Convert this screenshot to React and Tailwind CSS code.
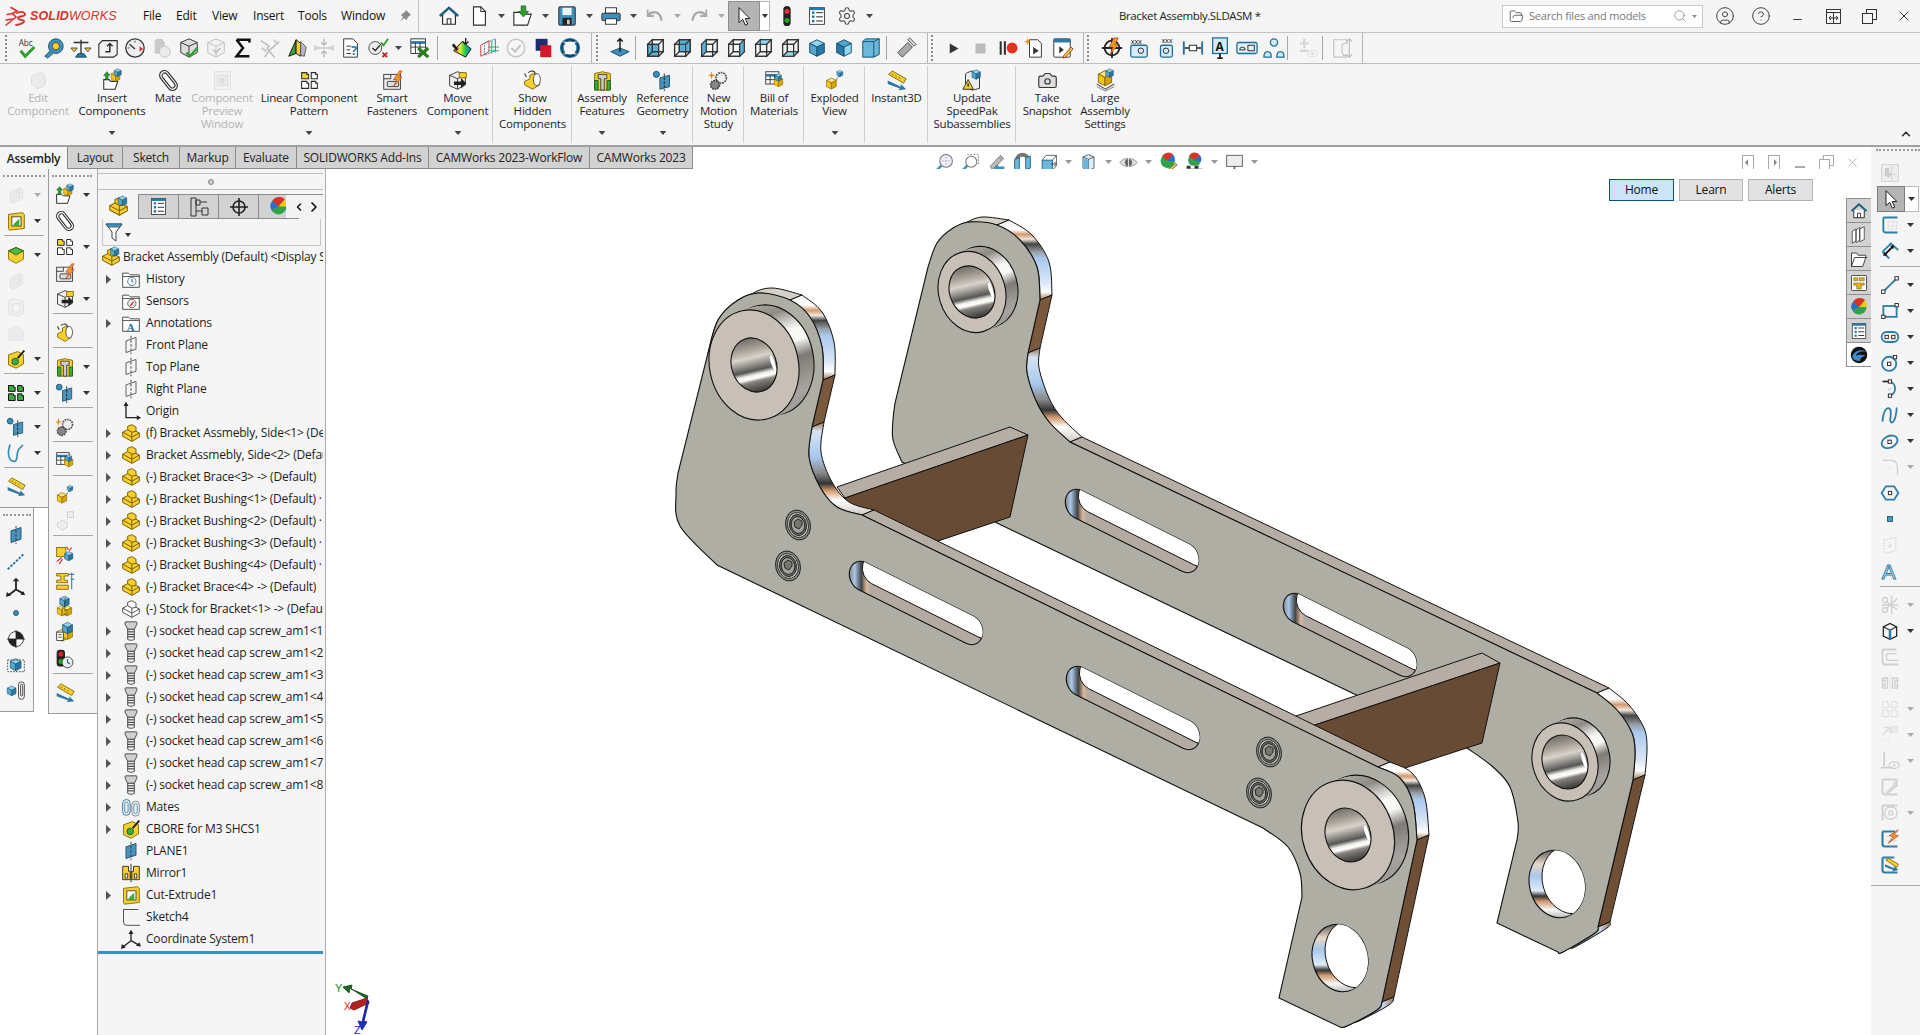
import React from 'react';
import { Settings, CircleUser, CircleHelp, ChevronUp, ChevronRight, ChevronLeft, Search, FolderOpen, X, Minus, Camera } from 'lucide-react';

const B1 = '#5cb0d6', B2 = '#1d6e9b', Y1 = '#f7cf2e', Y2 = '#7d6000', K = '#2d2d2d', SK = '#2e7ea8';
const Cube = ({ x = 0, y = 0, k = 1, t = '#93d3ee', l = '#55a6cf', r = '#2a78a6', st = '#12506f' }) => (
  <g transform={`translate(${x} ${y}) scale(${k})`} stroke={st} strokeWidth="1" strokeLinejoin="round">
    <path d="M12 3l8 4-8 4-8-4z" fill={t} /><path d="M4 7l8 4v10l-8-4z" fill={l} /><path d="M20 7l-8 4v10l8-4z" fill={r} />
  </g>
);
const YCube = (p) => <Cube t="#fde27a" l="#f5c518" r="#d9a400" st={Y2} {...p} />;
const Wire = ({ hi }) => (
  <g stroke={K} strokeWidth="1.1">
    <path d="M4 8h12v13H4z" fill={hi === 'front' ? B1 : 'none'} />
    <path d="M9 3h12v13H9z" fill={hi === 'back' ? B1 : 'none'} />
    <path d="M4 8l5-5h12l-5 5z" fill={hi === 'top' ? '#93d3ee' : 'none'} />
    <path d="M4 21l5-5h12l-5 5z" fill={hi === 'bot' ? '#93d3ee' : 'none'} />
    <path d="M4 8l5-5v13l-5 5z" fill={hi === 'left' ? B1 : 'none'} />
    <path d="M16 8l5-5v13l-5 5z" fill={hi === 'right' ? B1 : 'none'} />
  </g>
);
const Part = ({ f = Y1, st = Y2 }) => (
  <g stroke={st} strokeWidth="1.2" strokeLinejoin="round">
    <path d="M2 11l6-3V4l5-2 5 3v5l4 2v5l-9 5-11-6z" fill={f} />
    <path d="M2 11l11 6 9-5M13 17v5M8 8l5 3v6M13 11l5-1" fill="none" />
  </g>
);
const Asm = () => (<><Part /><Cube x={9} y={-2} k={0.62} /></>);
const Plane = ({ f = 'none', st = '#555' }) => (<><path d="M6 7l12-4v14L6 21z" fill={f} stroke={st} strokeWidth="1.1" /><path d="M12 1v22" stroke="#222" strokeWidth="1" strokeDasharray="3 2" /></>);
const Pattern = ({ a = Y1, b = Y1, st = K }) => (
  <g stroke={st} strokeWidth="1.2">
    <path d="M3 3h6v2h2v5H3z" fill={a} /><path d="M14 3h5v2h2v5h-7z" fill={a === Y1 ? '#fff' : b} /><path d="M3 13h6v2h2v6H3z" fill={b === Y1 ? '#fff' : b} /><path d="M14 13h5v2h2v6h-7z" fill={b === Y1 ? '#fff' : b} />
  </g>
);
const Folder = ({ children }) => (<><path d="M2 5h7l2 2h11v15H2z" fill="#fff" stroke="#444" strokeWidth="1.1" /><path d="M2 9h20" stroke="#444" strokeWidth="1" />{children}</>);
const Ruler = () => (<><path d="M3 5l4-4 16 9-3 5z" fill={Y1} stroke={Y2} /><path d="M7 4l1 2M11 6l1 2M15 8l1 2" stroke={Y2} /><path d="M2 12l15 7v-3l6 6-9 1 2-2L2 16z" fill="#2a78a6" /></>);
const Ref = () => (<><circle cx="5" cy="5" r="3.5" fill="#3d8fba" stroke="#174f6d" /><path d="M9 9l11-3v13L9 22z" fill="#4c93bb" stroke="#174f6d" /><path d="M14 4v20" stroke="#111" strokeDasharray="3 1.5" /></>);
const Clip = ({ c = K }) => (
  <g transform="rotate(-38 12 12)" stroke={c} strokeWidth="1.3">
    <rect x="6.5" y="-1" width="11" height="26" rx="5.5" fill="#fff" />
    <rect x="9" y="2" width="6" height="20" rx="3" />
  </g>
);
const Node = ({ x, y }) => <rect x={x - 2} y={y - 2} width="4" height="4" fill="#fff" stroke="#222" strokeWidth="1.1" />;
const sk = { stroke: SK, strokeWidth: 2.2, fill: 'none' };
const cb = { stroke: '#999', strokeWidth: 1.6, fill: 'none' };

const I = {
  home: <><path d="M2 12L12 3l10 9" stroke="#1d5e80" strokeWidth="2.6" /><path d="M5 11v10h14V11" stroke={K} strokeWidth="1.3" fill="#fff" /><path d="M10 21v-6h4v6" stroke={K} strokeWidth="1.2" /></>,
  doc: <><path d="M6 2h8l5 5v15H6z" fill="#fff" stroke={K} strokeWidth="1.2" /><path d="M14 2v5h5" stroke={K} strokeWidth="1.1" /></>,
  folderIn: <><path d="M2 8h7l2 2h10l-4 12H2z" fill="#fff" stroke={K} strokeWidth="1.2" /><path d="M10 1h5v6h3l-5.5 6L7 7h3z" fill="#2f9e2f" stroke="#145c14" strokeWidth=".8" /></>,
  save: <><rect x="3" y="2" width="18" height="20" rx="1" fill="#3f8fbc" stroke="#222" /><rect x="7" y="3" width="10" height="8" fill="#eaf3f8" /><rect x="7" y="14" width="10" height="8" fill="#222" /><rect x="12" y="16" width="3" height="5" fill="#ccc" /></>,
  print: <><rect x="6" y="3" width="12" height="6" fill="#fff" stroke={K} /><rect x="2" y="9" width="20" height="8" rx="1" fill="#3f8fbc" stroke={K} /><rect x="6" y="15" width="12" height="6" fill="#fff" stroke={K} /></>,
  undo: <><path d="M4 5v7h7" stroke="#aaa" strokeWidth="2" /><path d="M4 12c4-6 14-6 15 5" stroke="#aaa" strokeWidth="2.6" /></>,
  redo: <><path d="M20 5v7h-7" stroke="#aaa" strokeWidth="2" /><path d="M20 12C16 6 6 6 5 17" stroke="#aaa" strokeWidth="2.6" /></>,
  cursor: <path d="M6 2v18l4.5-4 3 7 3-1.3-3-6.7H19z" fill="#fff" stroke="#222" strokeWidth="1.2" />,
  traffic: <><rect x="8" y="1" width="8" height="22" rx="4" fill="#222" /><circle cx="12" cy="7" r="2.7" fill="#e33" /><circle cx="12" cy="17" r="2.7" fill="#2a2" /></>,
  list: <><rect x="3" y="2" width="18" height="20" fill="#fff" stroke={K} /><rect x="3" y="2" width="18" height="3" fill="#2a7aa8" /><path d="M6 8h3M6 13h3M6 18h3" stroke="#2a7aa8" strokeWidth="3" /><path d="M11 8h8M11 13h8M11 18h8" stroke={K} strokeWidth="1.2" /></>,
  gear: <Settings size={24} color="#444" strokeWidth={1.3} />,
  abc: <><text x="3" y="9.5" fontSize="9" fill="#333" fontFamily="Open Sans">Abc</text><path d="M5 15l5 6 10-10" stroke="#2f9e2f" strokeWidth="3.2" /></>,
  tape: <><circle cx="14" cy="10" r="8" fill="#3f8fbc" stroke="#174f6d" /><circle cx="14" cy="10" r="4" fill={Y1} stroke="#444" /><path d="M8 15l-6 6 3 2 6-5" fill="#3f8fbc" stroke="#174f6d" /></>,
  balance: <><path d="M12 3v17M4 6h16" stroke="#333" strokeWidth="1.5" /><path d="M1 12h7l-3.5 4zM16 12h7l-3.5 4z" fill={Y1} stroke="#444" /><path d="M6 22h12l-3-4H9z" fill="#2a78a6" stroke="#174f6d" /></>,
  jump: <><path d="M6 4h16v15l-4 3H2V8z" fill="#f2f2f2" stroke={K} strokeWidth="1.2" /><path d="M9 16h5V8M11 10l3-3 3 3" stroke={K} strokeWidth="1.6" /></>,
  gauge: <><circle cx="12" cy="12" r="10" fill="#eee" stroke="#333" strokeWidth="1.4" /><path d="M6 8l6 5" stroke="#333" strokeWidth="1.5" /><path d="M17 10l4 3-4 3z" fill="#d33" /><path d="M4 12h2M12 4v2" stroke="#333" /></>,
  clock: <><path d="M6 2h6l3 4v12H4V4z" fill="#888" /><circle cx="15" cy="16" r="6" fill="#ddd" stroke="#777" /></>,
  cubeCheck: <><path d="M3 6l9-4 9 4v11l-9 5-9-5z" fill="#ddd" stroke={K} /><path d="M3 6l9 4 9-4M12 10v11" stroke={K} /><path d="M9 17l4 4 8-9" stroke="#2f9e2f" strokeWidth="2.6" /></>,
  cubeCheckG: <><path d="M3 6l9-4 9 4v11l-9 5-9-5z" fill="#f2f2f2" stroke="#bbb" /><path d="M3 6l9 4 9-4M12 10v11" stroke="#bbb" /><path d="M9 14l3 3 5-5" stroke="#bbb" strokeWidth="1.6" /></>,
  sigma: <path d="M5 3h14v3M19 21H5l7-9-7-9" stroke="#111" strokeWidth="2.8" />,
  cross: <><path d="M2 4l9 6-2 3 8 9M22 5L12 14l-6 8" stroke="#bbb" strokeWidth="1.6" /><path d="M16 3l5 5M3 12l5 4" stroke="#ccc" strokeWidth="2.4" /></>,
  shells: <><path d="M11 3L3 21l8-3z" fill="#3aa03a" stroke="#111" /><path d="M11 3l5 4v14l-5-3z" fill={Y1} stroke="#111" /><path d="M16 5l6 6-2 10-4-1z" fill="#bbb" stroke="#555" /></>,
  compress: <><path d="M12 2v6M9 6l3 3 3-3M12 22v-6M9 18l3-3 3 3" stroke="#bbb" strokeWidth="1.6" /><path d="M2 10l5 2-5 2zM22 10l-5 2 5 2zM4 12h16" stroke="#c9c9c9" strokeWidth="1.4" /></>,
  docQ: <><path d="M4 2h10l5 5v15H4z" fill="#fff" stroke={K} /><path d="M7 10h5M7 14h4M7 18h5" stroke={K} /><text x="12" y="20" fontSize="14" fontWeight="700" fill="#2a7aa8" fontFamily="Open Sans">?</text></>,
  checkX: <><circle cx="9" cy="12" r="7" fill="#eee" stroke="#444" /><path d="M6 12l3 3 5-6" stroke="#333" strokeWidth="1.6" /><path d="M15 6l3 3 5-7" stroke="#2f9e2f" strokeWidth="2" /><path d="M17 17l5 5M22 17l-5 5" stroke="#c22" strokeWidth="2" /></>,
  tableX: <><path d="M2 2h16v16H2z" fill="#fff" stroke={K} /><path d="M2 6h16" stroke="#2a7aa8" strokeWidth="3" /><path d="M2 11h16M7 6v12M12 6v12" stroke={K} /><path d="M10 12l11 10M21 12L10 22" stroke="#2d7a1f" strokeWidth="3.4" /></>,
  zebra: <><path d="M3 15L12 5l10 8-6 9z" fill="url(#rb)" stroke="#111" /><path d="M2 8l5 6" stroke="#222" strokeWidth="3" /><path d="M16 1v7M13 5l3 3 3-3" stroke="#222" strokeWidth="1.5" /></>,
  mesh: <><path d="M3 9l9-5v12l-9 5z" fill="none" stroke="#d33" /><path d="M7 7l12-5v13L7 20z" fill="none" stroke="#2a7aa8" strokeDasharray="2 1" /><path d="M11 11h12M11 15h12M15 4v14M19 3v14" stroke="#2a7" strokeWidth="1" /></>,
  okGray: <><circle cx="12" cy="12" r="9.5" fill="#f5f5f5" stroke="#c5c5c5" strokeWidth="1.6" /><path d="M7 12l4 4 6-7" stroke="#c5c5c5" strokeWidth="2.2" /></>,
  squares: <><rect x="4" y="2" width="13" height="13" fill="#1c2d70" /><rect x="9" y="9" width="12" height="13" fill="#d8162a" /></>,
  ring: <><circle cx="12" cy="12" r="9" stroke="#1d6e9b" strokeWidth="4" /><path d="M5 5l6 3M19 5l-6 3M5 19l6-3M19 19l-6-3" stroke="#fff" strokeWidth="2" /><circle cx="12" cy="12" r="9" stroke="#123" strokeWidth="1" /></>,
  planeAxis: <><path d="M2 16l10-4 10 4-10 5z" fill="#3d8fba" stroke="#174f6d" /><path d="M12 16V2M9 5l3-3 3 3" stroke="#111" strokeWidth="1.5" /></>,
  wFront: <Wire hi="front" />, wBack: <Wire hi="back" />, wLeft: <Wire hi="left" />, wRight: <Wire hi="right" />, wTop: <Wire hi="top" />, wBot: <Wire hi="bot" />,
  iso: <Cube x={0} y={0} />, cubeD: <Cube t="#55a6cf" l="#2a78a6" r="#93d3ee" />,
  cubeR: <><path d="M6 2h15v17l-6 3H3V5z" fill="#6ab8dc" stroke="#12506f" /><path d="M3 5h12v17M15 5l6-3" stroke="#12506f" /></>,
  torch: <><path d="M3 17l11-11 5 5L8 22z" fill="#aaa" stroke="#444" /><path d="M14 3l7 7 2-2-7-7z" fill="#ddd" stroke="#444" /></>,
  play: <path d="M6 4l14 8-14 8z" fill="#333" />,
  stop: <rect x="4" y="4" width="16" height="16" fill="#bbb" />,
  rec: <><path d="M2 4h2.5v16H2zM7 4h2.5v16H7z" fill="#333" /><circle cx="17" cy="12" r="6.5" fill="#e8301c" /></>,
  film: <><path d="M6 3h9l4 4v15H6z" fill="#fff" stroke={K} /><path d="M10 11l6 4-6 4z" fill="#333" /><path d="M4 1l1 3 3 1-3 1-1 3-1-3-3-1 3-1z" fill="#e88b1a" /></>,
  filmPen: <><rect x="3" y="2" width="18" height="20" rx="1" fill="#fff" stroke={K} /><path d="M3 2h18v4H3z" fill="#2a7aa8" /><path d="M9 10l5 4-5 4z" fill="#333" /><path d="M14 20l8-9 2 2-8 9-3 1z" fill={Y1} stroke="#a33" /></>,
  target: <><circle cx="12" cy="12" r="8" stroke="#222" strokeWidth="2" /><path d="M12 1v22M1 12h22" stroke="#222" strokeWidth="2" /><path d="M14 1l-5 10h4l-3 8 9-11h-4l4-7z" fill="#f59b1a" stroke="#a33" strokeWidth=".7" /></>,
  xbox: <><rect x="3" y="9" width="18" height="13" rx="2" fill="#d6ebf6" stroke={B2} strokeWidth="1.4" /><circle cx="14" cy="15" r="3" stroke="#222" /><text x="3" y="8" fontSize="8" fill="#222" fontFamily="Open Sans">xxx</text></>,
  xbox2: <><rect x="6" y="9" width="13" height="13" rx="2" fill="#d6ebf6" stroke={B2} strokeWidth="1.4" /><circle cx="12" cy="15" r="3" stroke="#222" /><text x="7" y="7" fontSize="8" fill="#222" fontFamily="Open Sans">xxx</text></>,
  dimA: <><path d="M2 5v14M22 5v14" stroke={B2} strokeWidth="2" /><path d="M3 12h5M16 12h5" stroke="#222" strokeWidth="1.5" /><rect x="8" y="9" width="8" height="6" fill="#fff" stroke="#222" /></>,
  noteA: <><rect x="4" y="1" width="16" height="17" fill="#d6ebf6" stroke={B2} strokeWidth="1.4" /><text x="7" y="15" fontSize="13" fontWeight="700" fill="#111" fontFamily="Open Sans">A</text><path d="M12 18v4M9 23h6" stroke="#222" strokeWidth="2" /></>,
  label: <><rect x="1" y="6" width="22" height="12" rx="2" fill="#e0eef6" stroke={B2} strokeWidth="1.4" /><path d="M4 14a3 3 0 016 0zM13 9h7v6h-7z" stroke="#222" /></>,
  people: <><path d="M12 2a4 4 0 014 4c0 2-2 4-4 4s-4-2-4-4a4 4 0 014-4z" fill="#d6ebf6" stroke={B2} strokeWidth="1.4" /><path d="M1 22c0-8 8-8 8 0zM15 22c0-8 8-8 8 0z" fill="#d6ebf6" stroke={B2} strokeWidth="1.4" /></>,
  plusEye: <><path d="M9 2v10M4 7h10M4 15h9" stroke="#aaa" strokeWidth="2.6" /><ellipse cx="18" cy="18" rx="5" ry="3.5" stroke="#bbb" /><circle cx="18" cy="18" r="1.8" fill="#bbb" /></>,
  treeOff: <><path d="M3 3h14v4h-3l-2 2v8l2 3h3v2H3z" stroke="#c5c5c5" strokeWidth="1.3" /><path d="M20 2v20M17 5l3-3 3 3M17 19l3 3 3-3" stroke="#bbb" strokeWidth="1.2" /></>,
  editC: <><path d="M4 7l10-5 6 5-1 11-9 4-6-6z" fill="#ddd" stroke="#bbb" /><path d="M9 20l9-11 2 2-9 10z" fill="#eee" stroke="#bbb" /></>,
  clip: <Clip />,
  prevW: <><rect x="3" y="2" width="18" height="20" fill="#eee" stroke="#bbb" /><rect x="6" y="6" width="12" height="12" fill="#ddd" stroke="#bbb" /><path d="M9 9h5v7l-5-2z" fill="#bbb" /></>,
  pattern: <Pattern />,
  patternG: <Pattern a="#3fa83f" b="#3fa83f" st="#111" />,
  fast: <><rect x="2" y="5" width="19" height="17" fill="#eee" stroke={K} /><path d="M2 10h8V5" stroke={K} /><rect x="6" y="13" width="13" height="6" rx="1" fill="#ddd" stroke={K} /><path d="M20 1l-7 10h4l-4 8 10-11h-4l4-7z" fill="#f59b1a" stroke="#a33" strokeWidth=".7" /></>,
  move: <><path d="M3 6l9-4 9 3v12l-9 5-9-4z" fill="#eee" stroke={K} /><path d="M3 6l9 4v12M12 10l9-5" stroke={K} /><path d="M14 3h8v6h-8z" fill={Y1} stroke={Y2} /><path d="M8 13h8V9l6 6-6 6v-4H8z" fill="#222" /></>,
  hidden: <><path d="M3 13l6-3v-4l4-2 4 3v4l3 2v4l-8 5-9-5z" fill={Y1} stroke={Y2} /><ellipse cx="17" cy="11" rx="4" ry="7" fill="#fff" stroke="#444" /><path d="M7 3c4-3 8-2 8 2M5 8L3 4" stroke="#444" strokeWidth="1.4" /></>,
  feat: <><path d="M3 4l9-2 9 2v17l-4 2H7l-4-2z" fill={Y1} stroke={Y2} /><path d="M3 12h4v11H3zM17 12h4v11h-4z" fill="#3fa83f" stroke="#145c14" /><path d="M7 5h10v5h-3v13h-4V10H7z" fill="#ccc" stroke="#333" /></>,
  ref: <Ref />,
  gears: <><circle cx="15" cy="9" r="6" fill="#eee" stroke="#555" strokeWidth="2" strokeDasharray="2 1" /><circle cx="8" cy="17" r="5" fill="#888" stroke="#444" strokeWidth="2" strokeDasharray="2 1" /><path d="M4 1l1 4 4 1-4 1-1 4-1-4-3-1 3-1z" fill="#e88b1a" /></>,
  bom: <><rect x="2" y="2" width="15" height="14" fill="#fff" stroke={K} /><path d="M2 6h15" stroke="#2a7aa8" strokeWidth="3" /><path d="M2 11h15M7 6v10M12 6v10" stroke={K} /><YCube x={9} y={6} k={0.62} /><Cube x={11} y={3} k={0.45} /></>,
  expl: <><YCube x={0} y={7} k={0.7} /><path d="M14 11l4-5" stroke="#222" strokeDasharray="2 1.4" /><Cube x={13} y={-1} k={0.42} /></>,
  instant: <Ruler />,
  speed: <><path d="M6 3l6-2 8 3v17l-8 2-8-3V5z" fill="#eee" stroke="#222" /><Cube x={9} y={-2} k={0.6} /><path d="M1 22l6-11 6 11z" fill={Y1} stroke="#222" /><path d="M7 15v4" stroke="#222" strokeWidth="1.5" /></>,
  cam: <Camera size={24} color="#333" fill="#ddd" strokeWidth={1.3} />,
  large: <><path d="M2 16l10 6 10-6" stroke="#555" strokeWidth="1.2" /><path d="M2 19l10 5 10-5" stroke="#888" strokeWidth="1.2" /><YCube x={0} y={-2} k={0.95} /><Cube x={10} y={-3} k={0.55} /></>,
  cut: <><path d="M3 4l17-2 2 2v17l-18 2-1-2z" fill={Y1} stroke={Y2} /><rect x="7" y="7" width="11" height="11" fill="#fff" stroke="#333" /><path d="M9 16l7-7v9H9z" fill="#3fa83f" /></>,
  boss: <><path d="M3 7l9-4 9 4v10l-9 5-9-5z" fill={Y1} stroke={Y2} /><path d="M3 7l9 5 9-5-9-4z" fill="#54b840" stroke="#145c14" /></>,
  shellOff: <path d="M5 9l12-6 3 2v11L8 22l-3-2zM9 11l7-4v7l-7 3z" fill="#ddd" stroke="#bbb" />,
  boxOff: <><path d="M3 5l6-3 12 3v15l-6 3-12-3z" fill="#e8e8e8" stroke="#bbb" /><path d="M8 8h9v10H8z" fill="#f5f5f5" stroke="#bbb" /></>,
  wedgeOff: <path d="M3 8l10-5 8 7v11H3z" fill="#ddd" stroke="#ccc" />,
  wiz: <><path d="M3 7l11-4 7 4v11l-9 5-9-4z" fill={Y1} stroke={Y2} /><circle cx="11" cy="15" r="4" fill="#3fa83f" stroke="#145c14" /><path d="M14 11L22 2" stroke="#222" strokeWidth="2.4" /></>,
  curve: <path d="M5 2C1 12 3 22 10 22c5 0 2-10 5-14 2-3 4-3 5-6" stroke="#3b8bb3" strokeWidth="2" />,
  planeB: <Plane f="#4c93bb" st="#174f6d" />,
  dline: <path d="M2 22L22 3" stroke="#1d6e9b" strokeWidth="2.2" strokeDasharray="3 1.6" />,
  axis: <><path d="M12 15V3M12 15l9 5M12 15l-9 7" stroke="#222" strokeWidth="2.2" /><path d="M8 5l4-4 4 4z" fill="#222" /><path d="M17 21l6 1-2-5zM1 18l-1 6 6-2z" fill="#222" /></>,
  pt: <circle cx="12" cy="12" r="3" fill="#3d8fba" stroke="#174f6d" />,
  disc: <><circle cx="12" cy="12" r="9" fill="#fff" stroke="#222" /><path d="M12 3a9 9 0 019 9h-9zM12 21a9 9 0 01-9-9h9z" fill="#222" /><path d="M12 1v22M1 12h22" stroke="#222" /></>,
  cubeDash: <><Cube x={2} y={2} k={0.8} /><path d="M2 6h20v14H2z" stroke="#333" strokeDasharray="2 1.5" /></>,
  cubeClip: <><Cube x={-1} y={4} k={0.65} /><rect x="15" y="1" width="7" height="21" rx="3.5" stroke="#333" /><rect x="17.5" y="4" width="2.5" height="14" rx="1.2" stroke="#333" /></>,
  explOff: <><path d="M3 14l6-3 6 3v5l-6 4-6-4z" fill="#eee" stroke="#ccc" /><path d="M14 11l4-5" stroke="#ccc" strokeDasharray="2 1.4" /><rect x="15" y="1" width="7" height="7" fill="#eee" stroke="#ccc" /></>,
  coll: <><rect x="2" y="3" width="11" height="11" fill={Y1} stroke={Y2} /><Cube x={9} y={6} k={0.62} /><path d="M14 2l2 4M20 3l-3 4M2 20l6-5M5 23l4-6" stroke="#d33" strokeWidth="1.4" /></>,
  beams: <><path d="M2 3h14v3h-5v5h4v3H2v-3h5V6H2z" fill={Y1} stroke={Y2} /><path d="M2 17h14v5H2z" fill={Y1} stroke={Y2} /><path d="M17 4h6M19 10h4M20 2v20" stroke="#3b8bb3" strokeWidth="1.4" /></>,
  lightClock: <><rect x="2" y="1" width="10" height="20" rx="4" fill="#222" /><circle cx="7" cy="6" r="3" fill="#d22" /><circle cx="7" cy="15" r="3" fill="#2a2" /><circle cx="15" cy="16" r="6.5" fill="#eee" stroke="#333" /><path d="M15 12v4l3 2" stroke="#1d6e9b" strokeWidth="1.4" /></>,
  cubeAsm: <><YCube x={0} y={8} k={0.7} /><YCube x={6} y={8} k={0.7} /><Cube x={3} y={-3} k={0.7} /><path d="M12 1v22" stroke="#333" strokeDasharray="3 1.5" /></>,
  cubeAsm2: <><YCube x={-1} y={5} k={0.8} /><YCube x={7} y={5} k={0.7} /><Cube x={6} y={-3} k={0.75} /><path d="M2 11h8v10H2z" fill="#fff" stroke="#333" /><path d="M4 14h4M4 17h4" stroke="#333" /></>,
  mapOff: <><rect x="2" y="2" width="20" height="20" fill="#eee" stroke="#ccc" /><path d="M6 6h5v5l3 2-4 5-4-4z" fill="#ccc" /><path d="M14 4v16M4 14h16" stroke="#ccc" /></>,
  skGrid: <><path d="M4 3h17M4 3v15q0 3 3 3h14" {...sk} /><path d="M9 8h12M9 13h12M9 17h12M10 7v10M15 7v10M20 7v10" stroke="#ddd" /></>,
  dim: <><path d="M3 13L13 3l9 8M3 13l8 8" {...sk} /><path d="M6 16l9-9" stroke="#111" strokeWidth="2.4" /><path d="M4 18l5-1-4-4zM17 5l-5 1 4 4z" fill="#111" /></>,
  line: <><path d="M4 20L20 4" {...sk} /><Node x={4} y={20} /><Node x={20} y={4} /></>,
  rect: <><rect x="4" y="6" width="16" height="13" {...sk} /><Node x={4} y={19} /><Node x={20} y={5} /></>,
  slot: <><rect x="2" y="6" width="20" height="12" rx="6" {...sk} /><Node x={8} y={12} /><Node x={16} y={12} /></>,
  circ: <><circle cx="11" cy="13" r="8.5" {...sk} /><Node x={11} y={13} /><Node x={18} y={5} /></>,
  arc: <><path d="M3 3h8" stroke="#222" strokeWidth="2" /><path d="M12 3a9 9 0 010 17" {...sk} /><Node x={12} y={3} /><Node x={12} y={20} /><path d="M10 11l3 3M13 11l-3 3" stroke="#bbb" /></>,
  spline: <path d="M3 20C4 6 9 1 12 5s-2 16 2 16 6-12 6-18" {...sk} />,
  ellipse: <><ellipse cx="11.5" cy="13" rx="10" ry="7" transform="rotate(-25 11.5 13)" {...sk} /><Node x={11.5} y={13} /></>,
  filletOff: <><path d="M3 4h10q8 0 8 9v9" {...cb} /><path d="M9 12l3 3M12 12l-3 3" stroke="#ccc" /></>,
  poly: <><path d="M7 4h10l5 8-5 8H7l-5-8z" {...sk} /><Node x={12} y={12} /></>,
  ptS: <rect x="9" y="9" width="6" height="6" fill="#4c9ac4" stroke="#174f6d" />,
  planeOff: <><path d="M5 6l14-3v16L5 22z" stroke="#888" strokeDasharray="2 1.5" /><path d="M9 13h6M12 10v6" stroke="#aaa" /></>,
  textA: <text x="2" y="21" fontSize="25" fontWeight="400" fill="#fff" stroke={SK} strokeWidth="1.2" fontFamily="Liberation Sans">A</text>,
  trim: <><circle cx="6" cy="6" r="3" {...cb} /><circle cx="6" cy="18" r="3" {...cb} /><path d="M8 8l13 10M8 16L21 4M14 1v22M2 12h20" {...cb} /></>,
  cubeK: <><path d="M4 7l8-4 8 4v11l-8 4-8-4z" fill="#f7f7f7" stroke="#222" strokeWidth="1.5" /><path d="M4 7l8 4 8-4" stroke="#222" strokeWidth="1.3" /><path d="M12 11v11" stroke="#2a78a6" strokeWidth="3" /></>,
  offs: <><path d="M3 3h17M3 3v14q0 4 4 4h15" {...cb} strokeWidth="2.2" /><path d="M8 8h12M8 8v7q0 1 1 1h13" {...cb} /></>,
  mirOff: <><path d="M12 1v22" stroke="#bbb" /><path d="M3 6h6v12H3zM21 6h-6v12h6z" {...cb} /><path d="M3 9h3v6H3M21 9h-3v6h3" {...cb} /></>,
  patOff: <Pattern a="none" b="none" st="#bbb" />,
  moveOff: <><path d="M3 12l9-9M5 3h7v7" stroke="#bbb" strokeWidth="2" /><rect x="14" y="2" width="7" height="7" fill="#ddd" stroke="#bbb" /><path d="M3 15v7M7 15v7M11 15v7" stroke="#ddd" strokeWidth="2" strokeDasharray="2 1.5" /></>,
  relOff: <><path d="M5 1v17M1 20h14" {...cb} strokeWidth="2" /><ellipse cx="17" cy="17" rx="6" ry="4" {...cb} /><circle cx="17" cy="17" r="2" fill="#bbb" /></>,
  repOff: <><path d="M3 3h18M3 3v15q0 3 3 3h15" {...cb} strokeWidth="2.2" /><path d="M8 19l9-9a3 3 0 014-4l-2 3 2 1-3 2-9 8z" {...cb} /></>,
  imgOff: <><path d="M3 3h18M3 3v18" {...cb} strokeWidth="2.4" /><circle cx="13" cy="12" r="7.5" {...cb} /><circle cx="13" cy="12" r="2.5" {...cb} /></>,
  rapid: <><path d="M3 3h15M3 3v15q0 3 3 3h15" {...sk} strokeWidth="2.6" /><path d="M7 9h14M7 14h14M12 5v15M17 5v15" stroke="#ddd" /><path d="M22 1l-11 7 5 1-6 8 12-9-5-1z" fill="#f5a51a" stroke="#a33" strokeWidth=".8" /></>,
  instS: <><path d="M3 3h14M3 3v15q0 3 3 3h15" {...sk} strokeWidth="2.6" /><path d="M7 6l3-2 12 7-2 4z" fill={Y1} stroke={Y2} /><path d="M6 11l11 5v-3l5 5-8 2 2-2L6 14z" fill="#2a78a6" /></>,
  books: <><path d="M3 7l5-3v16l-5 3zM8 5l5-3v17l-5 3zM13 4l6-3v17l-6 3z" fill="#fff" stroke="#333" /></>,
  folderT: <path d="M2 4h7l2 3h10v3l-4 12H2zM2 22l4-12h17" fill="#fff" stroke="#333" strokeWidth="1.2" />,
  palette: <><rect x="2" y="2" width="20" height="20" rx="1" fill="#fff" stroke="#222" /><path d="M5 5h5v4H5zM12 5h7v4h-7zM5 12h14v3h-4v5H9v-5H5z" fill="#e9b200" stroke="#554" strokeWidth=".7" /></>,
  ball: <><circle cx="12" cy="12" r="10" fill="#2fa24a" /><path d="M12 12L4 5a10 10 0 0116-2z" fill="#d8332a" /><path d="M12 12l8-9a10 10 0 012 9z" fill="#f2c81a" /><path d="M12 12L4 5a10 10 0 00-1 11z" fill="#2a6fd0" /></>,
  swirl: <><circle cx="12" cy="12" r="11" fill="#111" /><path d="M3 14c2-8 13-11 19-6-8-2-13 1-14 5 3-2 9-2 13 0-5 1-7 3-8 7-5 0-9-2-10-6z" fill="#3b8bd0" /></>,
  zoomF: <><circle cx="14" cy="10" r="8" fill="#eef" stroke="#777" strokeWidth="1.3" /><path d="M14 5v10M9 10h10" stroke="#999" strokeDasharray="2 2" /><path d="M8 16l-6 6" stroke="#3d8fba" strokeWidth="3" /></>,
  zoomB: <><circle cx="13" cy="11" r="7" fill="#fff" stroke="#777" strokeWidth="1.3" /><path d="M8 2h14v14" stroke="#555" strokeDasharray="2 2" /><path d="M8 16l-6 6" stroke="#3d8fba" strokeWidth="3" /></>,
  prevV: <><path d="M4 17L15 5l4 4L7 21z" fill="#bbb" stroke="#666" /><path d="M16 3l5 5" stroke="#888" strokeWidth="2" /><path d="M22 17H14v-3l-6 5 6 5v-3h8z" fill="#3d8fba" /></>,
  sect: <><path d="M5 20V9c0-9 14-9 14 0v11" stroke="#777" strokeWidth="5" /><path d="M2 8l6-2v15l-6 2zM16 6l6-2v15l-6 2z" fill="#6ab8dc" stroke="#12506f" /></>,
  orient: <><path d="M4 9h13v13H4z" fill="#6ab8dc" stroke="#12506f" /><path d="M4 9l5-6h13v13l-5 6M17 9l5-6" stroke="#444" /><path d="M15 14h6M19 11l3 3-3 3" stroke="#222" /></>,
  disp: <><path d="M5 5l7-3 7 3v14l-7 3-7-3z" fill="#d8eef8" stroke="#444" /><path d="M5 5l7 3 7-3M12 8v14" stroke="#444" /><path d="M5 6l7 3v13l-7-3z" fill="#6ab8dc" /></>,
  eye: <><path d="M1 12c5-7 17-7 22 0-5 7-17 7-22 0z" fill="#ddd" stroke="#888" /><circle cx="12" cy="12" r="4.5" fill="#666" /><path d="M12 2v20" stroke="#fff" /></>,
  ballPen: <><circle cx="11" cy="10" r="9" fill="#2fa24a" /><path d="M11 10L4 4a9 9 0 0114-2z" fill="#d8332a" /><path d="M11 10l7-8a9 9 0 012 8z" fill="#2a6fd0" /><path d="M10 22l11-9 2 2-11 9-3 0z" fill={Y1} stroke="#555" /></>,
  ballChk: <><circle cx="12" cy="9" r="8" fill="#2fa24a" /><path d="M12 9L5 4a8 8 0 0114-1z" fill="#d8332a" /><path d="M12 9l7-6a8 8 0 011 8z" fill="#2a6fd0" /><path d="M2 16h20v8H2z" fill="#fff" /><path d="M2 16h5v4H2zM12 16h5v4h-5zM7 20h5v4H7zM17 20h5v4h-5z" fill="#333" /></>,
  mon: <><rect x="2" y="3" width="20" height="14" fill="#eee" stroke="#777" strokeWidth="1.4" /><path d="M12 17v4M7 22h10" stroke="#555" strokeWidth="2" /></>,
  hist: <Folder><circle cx="13" cy="15" r="5" fill="#fff" stroke="#1d6e9b" /><path d="M13 12v3l2 1" stroke="#333" /></Folder>,
  sens: <Folder><circle cx="13" cy="15" r="5" fill="#eee" stroke="#555" /><path d="M11 18l4-5" stroke="#d33" strokeWidth="1.6" /></Folder>,
  ann: <Folder><text x="7" y="21" fontSize="13" fontWeight="700" fontFamily="Liberation Serif" fill="#1d6e9b">A</text></Folder>,
  plane: <Plane />,
  origin: <><path d="M6 3v17h16" stroke="#222" strokeWidth="1.6" /><path d="M3 6l3-5 3 5zM19 17l5 3-5 3z" fill="#222" /></>,
  part: <Part />, asm: <Asm />,
  partW: <Part f="#fff" st="#555" />,
  screw: <><path d="M6 1h12q2 0 1 3l-3 6H8L5 4q-1-3 1-3z" fill="#d0d0d0" stroke="#333" /><path d="M8 10h8v12l-2 1h-4l-2-1z" fill="#eee" stroke="#333" /><path d="M8 13h8M8 16h8M8 19h8" stroke="#333" strokeWidth="1.2" /></>,
  mates: <><rect x="2" y="3" width="9" height="19" rx="4.5" stroke="#2e7ea8" strokeWidth="1.2" /><rect x="4.5" y="6" width="4" height="13" rx="2" stroke="#2e7ea8" /><rect x="13" y="5" width="9" height="18" rx="4.5" stroke="#888" strokeWidth="1.2" /><rect x="15.5" y="8" width="4" height="12" rx="2" stroke="#2e7ea8" /></>,
  mirror: <><path d="M2 4h7v6h2v10H2zM22 4h-7v6h-2v10h9z" fill={Y1} stroke="#222" /><path d="M5 13h3v5H5zM16 13h3v5h-3z" fill="#fff" stroke="#222" /><path d="M12 1v22" stroke="#111" /></>,
  sketch: <path d="M3 3h18M3 3v15q0 4 4 4h16" stroke="#333" strokeWidth="1" />,
  coord: <><path d="M12 14V3M12 14l9 5M12 14l-9 7" stroke="#222" strokeWidth="1.6" /><path d="M9 6l3-5 3 5zM18 20l6 1-2-5zM1 18l-1 6 6-2z" fill="#222" /></>,
  insert: <><path d="M2 11h6l2 2h8l-3 9H2z" fill="#fff" stroke={K} strokeWidth="1.2" /><YCube x={8} y={0} k={0.62} /><Cube x={12} y={-3} k={0.5} /><path d="M4 11V6H2l3.5-4L9 6H7v5z" fill="#2f9e2f" stroke="#145c14" strokeWidth=".7" /></>,
};

const Ic = ({ n, s = 22, off }) => (
  <svg viewBox="0 0 24 24" width={s} height={s} fill="none" className={off ? 'shrink-0 overflow-visible grayscale opacity-40' : 'shrink-0 overflow-visible'}>{I[n]}</svg>
);
const Caret = ({ c = '#444' }) => (
  <span className="flex w-[14px] shrink-0 items-center justify-center"><svg width="7" height="4"><path d="M0 0h7L3.5 4z" fill={c} /></svg></span>
);
const Slot = ({ n, off, s }) => <span className="flex h-full w-[27px] shrink-0 items-center justify-center"><Ic n={n} off={off} s={s} /></span>;
const T = ({ n, off, s }) => <span className="flex h-full w-[30px] shrink-0 items-center justify-center"><Ic n={n} off={off} s={s} /></span>;
const V = ({ n, off, s = 19 }) => <span className="flex h-full w-[26px] shrink-0 items-center justify-center"><Ic n={n} off={off} s={s} /></span>;
const Grip = () => <span className="h-[26px] w-[2px] shrink-0 border-l-2 border-dotted border-[#8c8c8c]" />;
const HGrip = ({ w }) => <span className={`h-[2px] border-t-2 border-dotted border-[#9a9a9a] ${w}`} />;
const Thin = () => <span className="block h-[24px] w-px shrink-0 bg-[#a5a5a5]" />;
const Div = () => <span className="h-full w-px shrink-0 bg-[#b4b4b4]" />;

function Logo() {
  return (
    <div className="flex w-[143px] shrink-0 items-center pl-[5px]">
      <svg width="21" height="21" viewBox="0 0 21 21" fill="none" stroke="#dc2f2b" strokeLinecap="round">
        <path d="M6 1.5l6 3.5-4.5 2.5L11 11l-5 4-5 4" strokeWidth="1.6" />
        <path d="M2 8.5l5.5-1M1 14l6-1" strokeWidth="1.3" />
        <path d="M12 7c4-2 8-1 8 1.5s-7 1-7 3.500 5 1.500 6 3-4 3.500-8 4" strokeWidth="1.8" />
      </svg>
      <span className="ml-[4px] whitespace-nowrap font-['Liberation_Sans',sans-serif] text-[12.5px] leading-none tracking-[0.15px] text-[#dc2f2b]"><b className="italic">SOLID</b><span className="italic tracking-[0.1px]">WORKS</span></span>
    </div>
  );
}

function Row1() {
  const menu = [['File', 'w-[33px]'], ['Edit', 'w-[36px]'], ['View', 'w-[41px]'], ['Insert', 'w-[45px]'], ['Tools', 'w-[43px]'], ['Window', 'w-[50px]']];
  return (
    <div className="flex h-[33px] shrink-0 items-center border-b border-[#c4c4c4] text-[12px] text-[#111]">
      <Logo />
      {menu.map(([m, w]) => <span key={m} className={`${w} shrink-0`}>{m}</span>)}
      <span className="flex w-[27px] shrink-0 justify-center">
        <svg width="14" height="14" viewBox="0 0 14 14"><path d="M8 1l5 5-2 1-2 3-1 1-2-2-4 4 3-5-2-2 1-1 3-2z" fill="#8a8a8a" /></svg>
      </span>
      <span className="h-full w-px shrink-0 bg-[#c4c4c4]" />
      <span className="w-[15px] shrink-0" />
      <T n="home" /><T n="doc" /><Caret /><T n="folderIn" /><Caret /><T n="save" /><Caret /><T n="print" /><Caret />
      <T n="undo" /><Caret c="#aaa" /><T n="redo" /><Caret c="#aaa" />
      <span className="flex h-[30px] w-[32px] shrink-0 items-center justify-center border border-[#8d8d8d] bg-[#b4b4b4]"><Ic n="cursor" s={20} /></span>
      <span className="flex h-[30px] w-[10px] shrink-0 items-center justify-center border border-l-0 border-[#b5b5b5] bg-white"><svg width="6" height="4"><path d="M0 0h6L3 4z" fill="#333" /></svg></span>
      <span className="w-[2px] shrink-0" />
      <T n="traffic" /><T n="list" s={20} /><T n="gear" s={20} /><Caret />
      <span className="ml-[243px] shrink-0 whitespace-nowrap text-[11.5px] tracking-[-0.4px] text-[#222]">Bracket Assembly.SLDASM *</span>
      <div className="ml-auto flex h-[23px] w-[201px] shrink-0 items-center border border-[#c9c9c9] bg-white pl-[6px] text-[#777]">
        <FolderOpen size={15} color="#444" strokeWidth={1.3} className="shrink-0" />
        <span className="ml-[5px] w-[127px] shrink-0 whitespace-nowrap text-[11px]">Search files and models</span>
        <Search size={14} color="#888" strokeWidth={1.4} className="ml-[17px] shrink-0" />
        <span className="ml-[5px] flex"><svg width="5" height="3"><path d="M0 0h5L2.5 3z" fill="#888" /></svg></span>
      </div>
      <div className="flex h-full shrink-0 items-center pl-[4px]">
        <span className="flex w-[36px] justify-center"><CircleUser size={20} color="#333" strokeWidth={1.1} /></span>
        <span className="flex w-[36px] justify-center"><CircleHelp size={20} color="#333" strokeWidth={1.1} /></span>
        <span className="flex w-[36px] justify-center pt-[7px]"><Minus size={13} color="#333" strokeWidth={1.8} /></span>
        <span className="flex w-[36px] justify-center"><svg width="15" height="15" viewBox="0 0 15 15" fill="none" stroke="#333"><rect x=".5" y=".5" width="14" height="14" /><path d="M.5 3.5h14M7.5 3.5v11M3 9h9M3 9l2-2M3 9l2 2M12 9l-2-2M12 9l-2 2" /></svg></span>
        <span className="flex w-[36px] justify-center"><svg width="15" height="15" viewBox="0 0 15 15" fill="none" stroke="#333"><rect x="4.5" y=".5" width="10" height="10" /><rect x=".5" y="4.5" width="10" height="10" fill="#f5f5f5" /></svg></span>
        <span className="flex w-[33px] justify-center"><X size={16} color="#333" strokeWidth={1.5} /></span>
      </div>
    </div>
  );
}

function Row2() {
  const a = [['abc'], ['tape'], ['balance'], ['jump'], ['gauge'], ['clock', 1], ['cubeCheck'], ['cubeCheckG'], ['sigma'], ['cross'], ['shells'], ['compress'], ['docQ'], ['checkX']];
  return (
    <div className="flex h-[31px] shrink-0 items-center border-b border-[#bdbdbd]">
      <span className="flex w-[13px] shrink-0 justify-center pr-[1px]"><Grip /></span>
      {a.map(([n, o]) => <Slot key={n} n={n} off={o} />)}
      <Caret /><span className="w-px" /><Slot n="tableX" />
      <span className="ml-[4px] mr-[10px]"><Thin /></span>
      <Slot n="zebra" /><Slot n="mesh" /><Slot n="okGray" /><Slot n="squares" /><Slot n="ring" />
      <span className="w-[8px]" /><Div /><span className="w-[4px]" /><Grip /><span className="w-[8px]" />
      <Slot n="planeAxis" />
      <span className="ml-[2px] mr-[5px]"><Thin /></span>
      <Slot n="wFront" /><Slot n="wBack" /><Slot n="wLeft" /><Slot n="wRight" /><Slot n="wTop" /><Slot n="wBot" /><Slot n="iso" /><Slot n="cubeD" /><Slot n="cubeR" />
      <span className="ml-[2px] mr-[5px]"><Thin /></span>
      <Slot n="torch" />
      <span className="w-[8px]" /><Div /><span className="w-[3px]" /><Grip /><span className="w-[7px]" />
      <Slot n="play" s={15} /><Slot n="stop" s={15} /><Slot n="rec" s={20} /><Slot n="film" /><Slot n="filmPen" />
      <span className="w-[8px]" /><Div /><span className="w-[3px]" /><Grip /><span className="w-[9px]" />
      <Slot n="target" /><Slot n="xbox" /><Slot n="xbox2" /><Slot n="dimA" /><Slot n="noteA" /><Slot n="label" /><Slot n="people" />
      <span className="mr-[5px]"><Thin /></span>
      <Slot n="plusEye" off />
      <span className="ml-[2px] mr-[5px]"><Thin /></span>
      <Slot n="treeOff" />
      <span className="w-[7px]" /><Div />
    </div>
  );
}

const ribbon = [
  ['Edit\nComponent', 'editC', 'w-[76px]', 1, 0],
  ['Insert\nComponents', 'insert', 'w-[72px]', 0, 1],
  ['Mate', 'clip', 'w-[40px]', 0, 0],
  ['Component\nPreview\nWindow', 'prevW', 'w-[68px]', 1, 0],
  ['Linear Component\nPattern', 'pattern', 'w-[106px]', 0, 1],
  ['Smart\nFasteners', 'fast', 'w-[60px]', 0, 0],
  ['Move\nComponent', 'move', 'w-[71px]', 0, 1, 1],
  ['Show\nHidden\nComponents', 'hidden', 'w-[79px]', 0, 0, 1],
  ['Assembly\nFeatures', 'feat', 'w-[60px]', 0, 1],
  ['Reference\nGeometry', 'ref', 'w-[61px]', 0, 1, 1],
  ['New\nMotion\nStudy', 'gears', 'w-[51px]', 0, 0, 1],
  ['Bill of\nMaterials', 'bom', 'w-[60px]', 0, 0, 1],
  ['Exploded\nView', 'expl', 'w-[61px]', 0, 1, 1],
  ['Instant3D', 'instant', 'w-[63px]', 0, 0, 1],
  ['Update\nSpeedPak\nSubassemblies', 'speed', 'w-[88px]', 0, 0, 1],
  ['Take\nSnapshot', 'cam', 'w-[62px]', 0, 0],
  ['Large\nAssembly\nSettings', 'large', 'w-[54px]', 0, 0],
];

function Ribbon() {
  return (
    <div className="flex h-[83px] shrink-0 border-b-2 border-[#a0a0a0] pt-[1px] text-[11.5px] leading-[13px]">
      {ribbon.map(([t, n, w, off, car, sep]) => (
        <div key={t} className={`relative flex ${w} shrink-0 flex-col items-center pt-[5px] text-center ${off ? 'text-[#b4b4b4]' : 'text-[#1c1c1c]'}`}>
          <Ic n={n} off={off} s={21} />
          <div className="whitespace-pre">{t}</div>
          {car ? <span className="absolute bottom-[10px] left-1/2 -translate-x-1/2"><svg width="7" height="4" className="block"><path d="M0 0h7L3.5 4z" fill="#444" /></svg></span> : null}
          {sep ? <span className="absolute bottom-[2px] right-0 top-[1px] w-px bg-[#d0d0d0]" /> : null}
        </div>
      ))}
      <div className="ml-auto flex items-end pb-[4px] pr-[7px]"><ChevronUp size={14} color="#222" strokeWidth={2.4} /></div>
    </div>
  );
}

const tabs = [['Assembly', 'w-[67px]'], ['Layout', 'w-[56px]'], ['Sketch', 'w-[57px]'], ['Markup', 'w-[56px]'], ['Evaluate', 'w-[61px]'], ['SOLIDWORKS Add-Ins', 'w-[132px]'], ['CAMWorks 2023-WorkFlow', 'w-[161px]'], ['CAMWorks 2023', 'w-[103px]']];

function TabRow() {
  return (
    <div className="flex h-[22px] shrink-0 bg-white">
      {tabs.map(([t, w], i) => (
        <div key={t} className={i === 0
          ? `flex ${w} shrink-0 items-center justify-center bg-[#f5f5f5] pt-[1px] text-[12px] font-semibold text-[#222]`
          : `flex ${w} shrink-0 items-center justify-center border-b border-r border-[#8a8a8a] bg-[#d2d2d2] text-[12px] text-[#222] ${i === 1 ? 'border-l' : ''}`}>{t}</div>
      ))}
      <div className="ml-[238px] flex h-[30px] shrink-0 items-center">
        <V n="zoomF" /><V n="zoomB" /><V n="prevV" /><V n="sect" /><V n="orient" /><Caret c="#999" /><V n="disp" /><Caret c="#999" /><V n="eye" /><Caret c="#999" /><V n="ballPen" /><V n="ballChk" /><Caret c="#999" /><V n="mon" /><Caret c="#999" />
      </div>
      <div className="ml-auto mr-[6px] flex h-[30px] shrink-0 items-center">
        <span className="flex w-[26px] justify-center"><svg width="12" height="15" fill="none" stroke="#aaa"><rect x=".5" y=".5" width="11" height="14" /><path d="M6 4v7L3 7.5z" fill="#888" stroke="none" /></svg></span>
        <span className="flex w-[26px] justify-center"><svg width="12" height="15" fill="none" stroke="#aaa"><rect x=".5" y=".5" width="11" height="14" /><path d="M6 4v7l3-3.5z" fill="#888" stroke="none" /></svg></span>
        <span className="flex w-[26px] justify-center pt-[9px]"><span className="h-[2px] w-[10px] bg-[#aaa]" /></span>
        <span className="flex w-[26px] justify-center"><svg width="15" height="15" fill="none" stroke="#aaa"><rect x="4.5" y=".5" width="10" height="10" /><rect x=".5" y="4.5" width="10" height="10" fill="#fff" /></svg></span>
        <span className="flex w-[26px] justify-center"><X size={15} color="#aaa" strokeWidth={1.3} /></span>
      </div>
    </div>
  );
}

const LS = () => <div className="flex h-[8px] shrink-0 items-start justify-end pt-[1px]"><span className="mx-auto h-px w-[40px] bg-[#a8a8a8]" /></div>;
const TR = ({ n, off, car, x = 'ml-[6px]' }) => (
  <div className="flex h-[26px] shrink-0 items-center">
    <span className={x}><Ic n={n} off={off} s={20} /></span>
    {car ? <span className="ml-[4px]"><Caret c={off ? '#aaa' : '#333'} /></span> : null}
  </div>
);

function Left() {
  return (
    <div className="flex w-[97px] shrink-0 items-start">
      <div className="flex w-[48px] shrink-0 flex-col">
        <div className="flex w-[48px] flex-col border-b border-[#9a9a9a] bg-[#f5f5f5] pb-[7px]">
          <div className="flex h-[13px] items-center pl-[3px]"><HGrip w="w-[42px]" /></div>
          <TR n="shellOff" off car /><TR n="cut" car /><LS />
          <TR n="boss" car /><TR n="shellOff" off /><TR n="boxOff" off /><TR n="wedgeOff" off /><TR n="wiz" car /><LS />
          <TR n="patternG" car /><LS />
          <TR n="ref" car /><TR n="curve" car /><LS />
          <TR n="instant" />
        </div>
        <div className="flex w-[34px] flex-col border-b border-r border-[#9a9a9a] bg-[#f5f5f5] pb-[7px]">
          <div className="flex h-[14px] items-center pl-[3px]"><HGrip w="w-[28px]" /></div>
          <TR n="planeB" /><TR n="dline" /><TR n="axis" /><TR n="pt" /><TR n="disc" /><TR n="cubeDash" /><TR n="cubeClip" />
        </div>
      </div>
      <div className="flex w-[49px] shrink-0 flex-col border-b border-l border-[#9a9a9a] bg-[#f5f5f5] pb-[7px]">
        <div className="flex h-[13px] items-center pl-[3px]"><HGrip w="w-[40px]" /></div>
        <TR n="insert" car /><TR n="clip" /><TR n="pattern" car /><TR n="fast" /><TR n="move" car /><LS />
        <TR n="hidden" /><LS />
        <TR n="feat" car /><TR n="ref" car /><LS />
        <TR n="gears" /><LS />
        <TR n="bom" /><LS />
        <TR n="expl" /><TR n="explOff" /><LS />
        <TR n="coll" /><TR n="beams" /><TR n="cubeAsm" /><TR n="cubeAsm2" /><TR n="lightClock" /><LS />
        <TR n="instant" />
      </div>
    </div>
  );
}

const scr = (i) => [`(-) socket head cap screw_am1<${i}> -> (Default) <<Default>_Display`, 'screw', 1];
const tree = [
  ['History', 'hist', 1], ['Sensors', 'sens', 0], ['Annotations', 'ann', 1], ['Front Plane', 'plane', 0], ['Top Plane', 'plane', 0], ['Right Plane', 'plane', 0], ['Origin', 'origin', 0],
  ['(f) Bracket Assmebly, Side<1> (Default) <<Default>', 'part', 1], ['Bracket Assmebly, Side<2> (Default) <<Default>', 'part', 1],
  ['(-) Bracket Brace<3> -> (Default)', 'part', 1],
  ['(-) Bracket Bushing<1> (Default) · <<Default>', 'part', 1], ['(-) Bracket Bushing<2> (Default) · <<Default>', 'part', 1], ['(-) Bracket Bushing<3> (Default) · <<Default>', 'part', 1], ['(-) Bracket Bushing<4> (Default) · <<Default>', 'part', 1],
  ['(-) Bracket Brace<4> -> (Default)', 'part', 1], ['(-) Stock for Bracket<1> -> (Default) <<Default>', 'partW', 0],
  scr(1), scr(2), scr(3), scr(4), scr(5), scr(6), scr(7), scr(8),
  ['Mates', 'mates', 1], ['CBORE for M3 SHCS1', 'wiz', 1], ['PLANE1', 'planeB', 0], ['Mirror1', 'mirror', 0], ['Cut-Extrude1', 'cut', 1], ['Sketch4', 'sketch', 0], ['Coordinate System1', 'coord', 0],
];

function Tree() {
  return (
    <div className="relative flex w-[229px] shrink-0 flex-col border-l border-r border-[#ababab] bg-[#f5f5f5] pr-[2px] text-[12px] text-[#1c1c1c]">
      <div className="mt-[4px] h-px bg-[#bdbdbd]" />
      <div className="flex h-[15px] items-center justify-center"><span className="h-[6px] w-[6px] rounded-full border border-[#888] bg-[#ccc]" /></div>
      <div className="h-px bg-[#bdbdbd]" />
      <div className="relative mt-[4px] flex h-[25px] border-t border-[#8a8a8a]">
        <span className="-mt-px flex h-[25px] w-[41px] items-center justify-center border-r border-[#8a8a8a] bg-[#f5f5f5]"><Ic n="asm" s={21} /></span>
        {['list', 'treeK', 'crossK', 'ball'].map((n) => (
          <span key={n} className="flex h-full w-[40px] items-center justify-center border-b border-r border-[#8a8a8a] bg-[#d2d2d2]">
            {n === 'treeK' ? <svg width="20" height="20" viewBox="0 0 20 20" fill="none" stroke="#333"><path d="M2 1h5v18H2zM7 3h4v5H7zM11 5h7M13 11h6v7h-6zM7 14h6" /></svg>
              : n === 'crossK' ? <svg width="20" height="20" viewBox="0 0 20 20" fill="none" stroke="#222" strokeWidth="1.6"><circle cx="10" cy="10" r="6" /><path d="M10 1v18M1 10h18" /></svg>
                : <Ic n={n} s={19} />}
          </span>
        ))}
        <span className="absolute right-0 top-0 flex h-[23px] w-[37px] items-center bg-[#f3f3f3]">
          <ChevronLeft size={12} color="#111" strokeWidth={3} className="ml-[7px]" />
          <ChevronRight size={16} color="#111" strokeWidth={2.6} className="ml-[1px]" />
        </span>
      </div>
      <div className="ml-[4px] mr-[2px] flex h-[27px] items-center border border-t-0 border-[#c6c6c6] pl-[2px]">
        <svg width="20" height="20" viewBox="0 0 20 20" fill="none"><path d="M1 2h16l-6 8v9l-4-3v-6z" fill="#fff" stroke="#444" /><path d="M1 2h16l-2 3H3z" fill="#4c9ac4" stroke="#174f6d" strokeWidth=".8" /></svg>
        <svg width="6" height="4" className="mt-[6px]"><path d="M0 0h6L3 4z" fill="#333" /></svg>
      </div>
      <div className="flex h-[22px] items-center overflow-hidden whitespace-nowrap pl-[3px]"><Ic n="asm" s={20} /><span className="ml-[2px]">Bracket Assembly (Default) &lt;Display State-1&gt;</span></div>
      {tree.map(([t, n, a], i) => (
        <div key={i} className="flex h-[22px] shrink-0 items-center overflow-hidden whitespace-nowrap pl-[8px]">
          <span className="flex w-[7px] shrink-0">{a ? <svg width="5" height="9"><path d="M0 0l5 4.5L0 9z" fill="#555" /></svg> : null}</span>
          <span className="ml-[7px] flex w-[22px] shrink-0 justify-center"><Ic n={n} s={20} /></span>
          <span className="ml-[4px]">{t}</span>
        </div>
      ))}
      <div className="mt-[1px] h-[3px] bg-[#3c8dc5]" />
      <div className="absolute bottom-auto left-[228px] top-[414px] h-[39px] w-[9px] border-b border-r border-[#a5a5a5] bg-[#f5f5f5]"><span className="absolute left-[2px] top-[16px] h-[5px] w-[5px] rounded-full bg-[#c8c8c8]" /></div>
      <div className="flex-1" />
    </div>
  );
}

/* ---------------- model drawing ---------------- */
const cr = (p) => {
  let d = '';
  for (let i = 0; i < p.length - 1; i++) {
    const p0 = p[i - 1] || p[i], p1 = p[i], p2 = p[i + 1], p3 = p[i + 2] || p2;
    d += `C${p1[0] + (p2[0] - p0[0]) / 6} ${p1[1] + (p2[1] - p0[1]) / 6} ${p2[0] - (p3[0] - p1[0]) / 6} ${p2[1] - (p3[1] - p1[1]) / 6} ${p2[0]} ${p2[1]}`;
  }
  return d;
};
const outline = (segs) => `M${segs[0][0]} ` + segs.map((s, i) => (i ? `L${s[0]} ` : '') + cr(s)).join(' ') + 'Z';
const OFF = [12, -5];
const sh = (p, o = OFF) => p.map(([x, y]) => [x + o[0], y + o[1]]);
const band = (s) => `M${s[0]} ${cr(s)} L${sh([s[s.length - 1]])[0]} ${cr(sh(s).reverse())}Z`;

const ell = (cx, cy, hx, hy) => {
  const k2 = Math.sqrt(Math.max(hy * hy - 0.25 * hx * hx, 1) / 0.916);
  const k1 = Math.sqrt(Math.max(hx * hx - 0.0676 * k2 * k2, 1) / 0.8);
  const a = [0.894 * k1, 0.447 * k1], b = [-0.26 * k2, 0.966 * k2];
  const S11 = hx * hx, S22 = hy * hy, S12 = a[0] * a[1] + b[0] * b[1];
  const th = 0.5 * Math.atan2(2 * S12, S11 - S22);
  const m = (S11 + S22) / 2, r = Math.sqrt(((S11 - S22) / 2) ** 2 + S12 * S12);
  const rx = Math.sqrt(m + r), ry = Math.sqrt(m - r), deg = (th * 180) / Math.PI;
  const ex = rx * Math.cos(th), ey = rx * Math.sin(th);
  return `M${cx + ex} ${cy + ey}A${rx} ${ry} ${deg} 1 1 ${cx - ex} ${cy - ey}A${rx} ${ry} ${deg} 1 1 ${cx + ex} ${cy + ey}Z`;
};
const slotPath = (cx, cy, o = [0, 0]) => {
  const u = [0.894, 0.447], v = [-0.26, 0.966], L = 60, R = 14;
  const c = [cx + o[0], cy + o[1]];
  const P = (l, w) => `${c[0] + u[0] * l + v[0] * w} ${c[1] + u[1] * l + v[1] * w}`;
  const a = [u[0] * R, u[1] * R], b = [v[0] * R, v[1] * R];
  const S11 = a[0] ** 2 + b[0] ** 2, S22 = a[1] ** 2 + b[1] ** 2, S12 = a[0] * a[1] + b[0] * b[1];
  const th = 0.5 * Math.atan2(2 * S12, S11 - S22), m = (S11 + S22) / 2, r = Math.sqrt(((S11 - S22) / 2) ** 2 + S12 ** 2);
  const rx = Math.sqrt(m + r), ry = Math.sqrt(m - r), deg = (th * 180) / Math.PI;
  return `M${P(-L, -R)}L${P(L, -R)}A${rx} ${ry} ${deg} 0 1 ${P(L, R)}L${P(-L, R)}A${rx} ${ry} ${deg} 0 1 ${P(-L, -R)}Z`;
};

const F = {
  top: [[708, 353], [718, 320], [738, 300], [760, 293], [790, 300]],
  lug: [[790, 300], [810, 317], [822, 347], [823, 380]],
  neck: [[823, 380], [812, 427]],
  cc: [[812, 427], [809, 457], [820, 487], [837, 507], [862, 515]],
  strip: [[862, 515], [1378, 767]],
  lug2: [[1378, 767], [1400, 778], [1413, 803], [1417, 840]],
  side: [[1417, 840], [1382, 1002]],
  tip: [[1382, 1002], [1377, 1010], [1347, 1026], [1340, 1027]],
};
const frontFace = outline([[...F.top, ...F.lug.slice(1)], F.cc, F.lug2, F.tip, [[1279, 998]], [[1302, 897], [1300, 873], [1288, 847], [1263, 828]], [[717, 565], [680, 526], [676, 493], [678, 473]]]);
const R = {
  top: [[953, 228], [970, 222], [997, 225]],
  lug: [[997, 225], [1020, 240], [1037, 267], [1040, 300]],
  neck: [[1040, 300], [1028, 353]],
  cc: [[1028, 353], [1027, 373], [1037, 403], [1050, 423], [1070, 442]],
  strip: [[1070, 442], [1597, 693]],
  lug2: [[1597, 693], [1617, 710], [1632, 733], [1635, 753], [1633, 780]],
  side: [[1633, 780], [1598, 927]],
  tip: [[1598, 927], [1595, 933], [1563, 952], [1558, 952]],
};
const backFace = outline([[[928, 267], [937, 243], ...R.top, ...R.lug.slice(1)], R.cc, R.lug2, R.tip, [[1497, 923]], [[1517, 840], [1518, 822], [1510, 787], [1493, 767], [1467, 748]], [[997, 523]], [[940, 480]], [[902, 462], [893, 440], [893, 420], [895, 403]]]);

const Bands = ({ s }) => (
  <g stroke="#111" strokeWidth="1">
    <path d={band(s.top)} fill="#d6d1c8" />
    <path d={band(s.lug)} fill="url(#chromeA)" />
    <path d={band(s.neck)} fill="#7a583c" />
    <path d={band(s.cc)} fill="url(#chromeB)" />
    <path d={band(s.strip)} fill="#b6ada5" />
    <path d={band(s.lug2)} fill="url(#chromeA)" />
    <path d={band(s.side)} fill="#6f4f36" />
    <path d={band(s.tip)} fill="url(#chromeC)" />
  </g>
);
const Bush = ({ c, h, hole, off = [13, -5] }) => (
  <g>
    <path d={ell(c[0] + off[0], c[1] + off[1], h[0], h[1])} fill="url(#wash)" stroke="#111" strokeWidth="1.1" />
    {[0.8, 0.6, 0.4, 0.2].map((t) => <path key={t} d={ell(c[0] + off[0] * t, c[1] + off[1] * t, h[0], h[1])} fill="url(#wash)" />)}
    <path d={ell(c[0], c[1], h[0], h[1])} fill="#c8c0b6" stroke="#111" strokeWidth="1.1" />
    <path d={ell(c[0], c[1], hole[0], hole[1])} fill="url(#bore)" stroke="#111" strokeWidth="1.1" />
    <ellipse cx={c[0] + hole[0] - 4} cy={c[1] - 2} rx="2" ry="8" fill="#fff" transform={`rotate(-18 ${c[0] + hole[0] - 4} ${c[1] - 2})`} />
  </g>
);
const Slot3 = ({ c, id }) => (
  <g>
    <clipPath id={id}><path d={slotPath(c[0], c[1])} /></clipPath>
    <path d={slotPath(c[0], c[1])} fill="url(#slotWall)" stroke="#111" strokeWidth="1.1" />
    <path d={slotPath(c[0], c[1], [13, -6])} fill="#fff" stroke="#111" strokeWidth="1" clipPath={`url(#${id})`} />
  </g>
);
const Hole = ({ c, h, id }) => (
  <g>
    <clipPath id={id}><path d={ell(c[0], c[1], h[0], h[1])} /></clipPath>
    <path d={ell(c[0], c[1], h[0], h[1])} fill="url(#holeWall)" stroke="#111" strokeWidth="1.1" />
    <path d={ell(c[0] + 13, c[1] - 4, h[0], h[1])} fill="#fff" stroke="#111" strokeWidth="1" clipPath={`url(#${id})`} />
  </g>
);
const SHCS = ({ c }) => (
  <g>
    <path d={ell(c[0], c[1], 12.5, 15)} fill="#8a8982" stroke="#222" />
    <path d={ell(c[0], c[1], 10.5, 12.5)} fill="#c4c2ba" stroke="#333" />
    <path d={ell(c[0], c[1], 8.5, 10.5)} fill="#6e6d67" stroke="#222" />
    <path d={ell(c[0], c[1], 6.8, 8.4)} fill="#a3a29a" stroke="#222" />
    <path d={`M${c[0] - 4} ${c[1] - 3}l4 -3 4 2v4l-3 4-4-2z`} fill="#77766f" stroke="#111" strokeWidth=".8" />
  </g>
);

function Model() {
  return (
    <svg viewBox="326 169 1545 866" className="absolute inset-0 h-[866px] w-[1545px]" fill="none">
      <defs>
        <linearGradient id="rb" x1="0" y1="0" x2="1" y2="0"><stop offset="0" stopColor="#e33" /><stop offset=".35" stopColor="#ee3" /><stop offset=".65" stopColor="#2c4" /><stop offset="1" stopColor="#27d" /></linearGradient>
        <linearGradient id="chromeA" x1="0" y1="0" x2="0" y2="1">
          <stop offset="0" stopColor="#f3f1ee" /><stop offset=".12" stopColor="#fff" /><stop offset=".18" stopColor="#d39a70" /><stop offset=".24" stopColor="#f0e7de" /><stop offset=".3" stopColor="#444" /><stop offset=".4" stopColor="#9aa0a6" /><stop offset=".48" stopColor="#a9c8ee" /><stop offset=".78" stopColor="#dbe6f5" /><stop offset=".9" stopColor="#fff" /><stop offset="1" stopColor="#9a7452" />
        </linearGradient>
        <linearGradient id="chromeB" x1="0" y1="0" x2="0" y2="1">
          <stop offset="0" stopColor="#9a7452" /><stop offset=".1" stopColor="#d5e2f3" /><stop offset=".38" stopColor="#a9c8ee" /><stop offset=".55" stopColor="#888" /><stop offset=".66" stopColor="#333" /><stop offset=".74" stopColor="#d39a70" /><stop offset=".84" stopColor="#fff" /><stop offset="1" stopColor="#cfc8c0" />
        </linearGradient>
        <linearGradient id="chromeC" x1="1" y1="0" x2="0" y2="0"><stop offset="0" stopColor="#9a7452" /><stop offset=".2" stopColor="#c8d8ee" /><stop offset=".6" stopColor="#555" /><stop offset="1" stopColor="#777" /></linearGradient>
        <linearGradient id="wash" x1="0" y1="0" x2="1" y2="1">
          <stop offset="0" stopColor="#cfcac2" /><stop offset=".35" stopColor="#8f8b85" /><stop offset=".52" stopColor="#f8f8f6" /><stop offset=".6" stopColor="#f8f8f6" /><stop offset=".7" stopColor="#7d7a75" /><stop offset=".85" stopColor="#a8a5a0" /><stop offset="1" stopColor="#5a5a58" />
        </linearGradient>
        <linearGradient id="bore" x1=".3" y1="0" x2=".5" y2="1">
          <stop offset="0" stopColor="#6a6966" /><stop offset=".22" stopColor="#a9a097" /><stop offset=".38" stopColor="#d8d2ca" /><stop offset=".52" stopColor="#8d8a85" /><stop offset=".62" stopColor="#555" /><stop offset=".7" stopColor="#f2f0ec" /><stop offset=".76" stopColor="#fff" /><stop offset=".82" stopColor="#86827c" /><stop offset="1" stopColor="#3f3e3c" />
        </linearGradient>
        <linearGradient id="slotWall" x1="0" y1="0" x2="1" y2="0">
          <stop offset="0" stopColor="#888" /><stop offset=".04" stopColor="#a9c8ee" /><stop offset=".09" stopColor="#444" /><stop offset=".13" stopColor="#d8b89a" /><stop offset=".16" stopColor="#b3aaa2" /><stop offset="1" stopColor="#b3aaa2" />
        </linearGradient>
        <linearGradient id="holeWall" x1="0" y1="0" x2="0" y2="1">
          <stop offset="0" stopColor="#5e5e5e" /><stop offset=".2" stopColor="#e8d6c4" /><stop offset=".38" stopColor="#a9c8ee" /><stop offset=".6" stopColor="#e2ecf8" /><stop offset=".68" stopColor="#333" /><stop offset=".76" stopColor="#d39a70" /><stop offset=".88" stopColor="#f8f8f8" /><stop offset="1" stopColor="#bbb" />
        </linearGradient>
      </defs>
      <Bands s={R} />
      <path d={backFace} fill="#aeaea4" stroke="#111" strokeWidth="1.1" />
      <Slot3 c={[1132, 531]} id="s1" />
      <Slot3 c={[1350, 635]} id="s2" />
      <Hole c={[1557, 884]} h={[28, 33.7]} id="h1" />
      <Bush c={[972, 292]} h={[34, 40.5]} hole={[23, 26]} off={[12, -5]} />
      <Bush c={[1565, 762]} h={[33, 39]} hole={[23, 27]} off={[12, -5]} />
      <path d="M837 487L1010 427 1028 435 845 498z" fill="#b6ada5" stroke="#111" />
      <path d="M845 498L1028 435 1010 517 932 543 850 505z" fill="#674b35" stroke="#111" />
      <path d="M1293 717L1482 653 1500 663 1312 726z" fill="#b6ada5" stroke="#111" />
      <path d="M1312 726L1500 663 1482 743 1402 769 1380 765z" fill="#674b35" stroke="#111" />
      <Bands s={F} />
      <path d={frontFace} fill="#aeaea4" stroke="#111" strokeWidth="1.1" />
      <Slot3 c={[916, 603]} id="s3" />
      <Slot3 c={[1133, 708]} id="s4" />
      <Hole c={[1340, 958]} h={[28, 33.7]} id="h2" />
      <SHCS c={[798, 525]} /><SHCS c={[788, 566]} /><SHCS c={[1269, 752]} /><SHCS c={[1259, 793]} />
      <Bush c={[754, 365]} h={[45, 55]} hole={[23, 27]} off={[15, -5]} />
      <Bush c={[1348, 835]} h={[46.5, 54.7]} hole={[23, 27]} off={[14, -5]} />
      <g>
        <path d="M367 999L350 988 349 993 343 987 352 985 351 989 368 996z" fill="#1f6b26" stroke="#0c3f10" strokeWidth=".8" />
        <path d="M367 998l-15 5-2 5 4 2 15-7z" fill="#b22222" stroke="#6e1010" strokeWidth=".8" />
        <path d="M367 1001l-5 21-4-1 4 9 5-8-3-1 5-20z" fill="#1c2fc4" stroke="#0f1a80" strokeWidth=".8" />
        <text x="335" y="992" fontSize="11" fill="#1a8f1a" fontFamily="Liberation Sans">Y</text>
        <text x="344" y="1010" fontSize="10" fill="#d22" fontFamily="Liberation Sans">X</text>
        <text x="354" y="1034" fontSize="11" fill="#22d" fontFamily="Liberation Sans">Z</text>
      </g>
    </svg>
  );
}

function Viewport() {
  const rt = ['home', 'books', 'folderT', 'palette', 'ball', 'list', 'swirl'];
  return (
    <div className="relative min-w-0 flex-1 bg-white">
      <Model />
      <div className="absolute right-[58px] top-[10px] flex gap-[5px] text-[12px] text-[#111]">
        <span className="flex h-[22px] w-[65px] items-center justify-center border border-[#0b4f93] bg-[#cde4f7]">Home</span>
        <span className="flex h-[22px] w-[64px] items-center justify-center border border-[#b2b2b2] bg-[#e1e1e1]">Learn</span>
        <span className="flex h-[22px] w-[65px] items-center justify-center border border-[#b2b2b2] bg-[#e1e1e1]">Alerts</span>
      </div>
      <div className="absolute right-0 top-[29px] flex w-[25px] flex-col border-b border-l border-[#8f8f8f]">
        {rt.map((n, i) => (
          <span key={n} className={`flex h-[24px] items-center justify-center border-t border-[#8f8f8f] ${i === 6 ? 'bg-white' : 'bg-[#d2d2d2]'}`}><Ic n={n} s={18} /></span>
        ))}
      </div>
    </div>
  );
}

const RS = () => <div className="flex h-[8px] items-start justify-end pt-[2px]"><span className="h-px w-[40px] bg-[#a8a8a8]" /></div>;
const RR = ({ n, off, car }) => (
  <div className="flex h-[26px] shrink-0 items-center">
    <span className="ml-[9px]"><Ic n={n} off={off} s={20} /></span>
    {car ? <span className="ml-[7px] flex"><svg width="7" height="4"><path d="M0 0h7L3.5 4z" fill={off ? '#aaa' : '#333'} /></svg></span> : null}
  </div>
);

function RightBar() {
  return (
    <div className="flex w-[49px] shrink-0 flex-col bg-[#f5f5f5]">
      <div className="flex h-[13px] items-center justify-end pb-[8px]"><HGrip w="w-[44px]" /></div>
      <RR n="mapOff" />
      <div className="flex h-[26px] shrink-0 items-center pl-[6px]">
        <span className="flex h-[26px] w-[28px] items-center justify-center border border-[#7d7d7d] bg-[#b4b4b4]"><Ic n="cursor" s={20} /></span>
        <span className="flex h-[26px] w-[14px] items-center justify-center border border-l-0 border-[#bbb] bg-white"><svg width="7" height="4"><path d="M0 0h7L3.5 4z" fill="#333" /></svg></span>
      </div>
      <RR n="skGrid" car /><RR n="dim" car /><RS />
      <RR n="line" car /><RR n="rect" car /><RR n="slot" car /><RR n="circ" car /><RR n="arc" car /><RR n="spline" car /><RR n="ellipse" car /><RR n="filletOff" car off /><RR n="poly" /><RR n="ptS" /><RR n="planeOff" off /><RR n="textA" /><RS />
      <RR n="trim" off car /><RR n="cubeK" car /><RR n="offs" off /><RR n="mirOff" off /><RR n="patOff" off car /><RR n="moveOff" off car /><RR n="relOff" off car /><RR n="repOff" off /><RR n="imgOff" off car /><RR n="rapid" /><RR n="instS" />
      <div className="mt-[7px] h-px bg-[#a8a8a8]" />
    </div>
  );
}

export default function App() {
  return (
    <div className="flex h-[1035px] w-[1920px] flex-col overflow-hidden bg-[#f5f5f5] font-['Open_Sans',sans-serif] tracking-[-0.2px]">
      <Row1 />
      <Row2 />
      <Ribbon />
      <div className="flex min-h-0 flex-1">
        <div className="flex min-w-0 flex-1 flex-col">
          <TabRow />
          <div className="flex min-h-0 flex-1 bg-white">
            <Left />
            <Tree />
            <Viewport />
          </div>
        </div>
        <RightBar />
      </div>
    </div>
  );
}
